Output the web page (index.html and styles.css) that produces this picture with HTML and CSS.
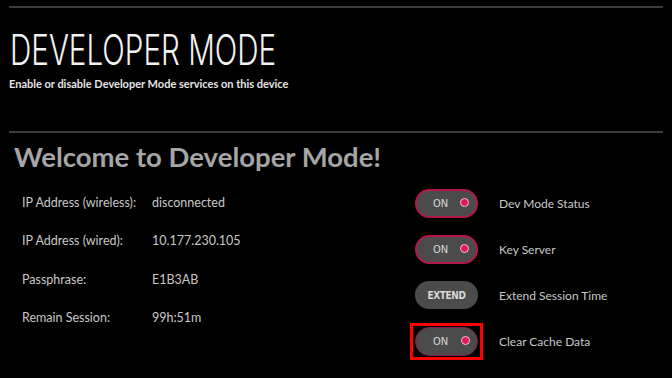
FILE: index.html
```html
<!DOCTYPE html>
<html lang="en">
<head>
  <meta charset="UTF-8">
  <meta name="viewport" content="width=device-width, initial-scale=1.0">
  <title>Developer Mode</title>
  <link rel="stylesheet" href="styles.css">
</head>
<body>
  <div class="page">
    <div class="rule"></div>
    <h1 class="title">DEVELOPER MODE</h1>
    <p class="subtitle">Enable or disable Developer Mode services on this device</p>
    <div class="rule rule-bottom"></div>
    <h2 class="welcome">Welcome to Developer Mode!</h2>
    <div class="content">
      <div class="info">
        <div class="info-row"><span class="info-label">IP Address (wireless):</span><span class="info-value">disconnected</span></div>
        <div class="info-row"><span class="info-label">IP Address (wired):</span><span class="info-value">10.177.230.105</span></div>
        <div class="info-row"><span class="info-label">Passphrase:</span><span class="info-value">E1B3AB</span></div>
        <div class="info-row"><span class="info-label">Remain Session:</span><span class="info-value">99h:51m</span></div>
      </div>
      <div class="controls">
        <div class="control-row">
          <button class="toggle">ON<span class="dot"></span></button>
          <span class="control-label">Dev Mode Status</span>
        </div>
        <div class="control-row">
          <button class="toggle">ON<span class="dot"></span></button>
          <span class="control-label">Key Server</span>
        </div>
        <div class="control-row">
          <button class="extend-btn">EXTEND</button>
          <span class="control-label">Extend Session Time</span>
        </div>
        <div class="control-row">
          <div class="highlight">
            <button class="toggle toggle-focus">ON<span class="dot"></span></button>
          </div>
          <span class="control-label">Clear Cache Data</span>
        </div>
      </div>
    </div>
  </div>
</body>
</html>
```

FILE: styles.css
```css
    body {
      margin: 0;
      background-color: #000;
      color: #fff;
      width: 672px;
      height: 378px;
      overflow: hidden;
      font-family: 'Lato', 'Open Sans', sans-serif;
    }
    .page {
      padding: 6px 9px 0 9px;
      width: 654px;
    }
    .rule {
      height: 2px;
      background-color: #3d3d3d;
    }
    .rule-bottom {
      margin-top: 40px;
    }
    .title {
      margin: 21px 0 0 1px;
      font-family: 'Inter', sans-serif;
      font-weight: 300;
      font-size: 42px;
      line-height: 42px;
      transform: scaleX(0.705);
      transform-origin: left center;
      white-space: nowrap;
      color: #f2f2f2;
    }
    .subtitle {
      margin: 6px 0 0 0;
      font-size: 11px;
      font-weight: 700;
      line-height: 14px;
      color: #e4e4e4;
    }
    .welcome {
      margin: 9px 0 0 5px;
      font-size: 27.5px;
      font-weight: 700;
      line-height: 30px;
      color: #a6a6a6;
    }
    .content {
      display: flex;
      margin-top: 8px;
    }
    .info {
      margin-left: 13px;
      padding-top: 3px;
      width: 393px;
    }
    .info-row {
      display: flex;
      align-items: center;
      height: 38.5px;
      font-size: 12.5px;
      color: #c8c8c8;
    }
    .info-label {
      width: 130px;
    }
    .controls {
      display: flex;
      flex-direction: column;
    }
    .control-row {
      display: flex;
      align-items: center;
      height: 46px;
    }
    .control-label {
      margin-left: 21px;
      font-size: 12px;
      color: #c8c8c8;
    }
    .toggle, .extend-btn {
      position: relative;
      box-sizing: border-box;
      width: 63px;
      height: 29px;
      border-radius: 15px;
      background-color: #4b4b4b;
      border: 2px solid #b3184d;
      color: #d8d8d8;
      font-family: 'DejaVu Sans Condensed', sans-serif;
      font-size: 11px;
      text-align: left;
      padding: 0 0 0 16px;
      cursor: pointer;
    }
    .extend-btn {
      border-color: #4b4b4b;
      text-align: center;
      font-weight: bold;
      padding: 0;
      height: 28px;
      font-size: 10px;
      letter-spacing: -0.4px;
    }
    .dot {
      position: absolute;
      right: 7px;
      top: 50%;
      width: 7px;
      height: 7px;
      margin-top: -5px;
      border-radius: 50%;
      background-color: #e0195c;
      border: 1.5px solid #f0c0d0;
    }
    .toggle-focus {
      border: 1px solid #8c1c46;
      padding-left: 17px;
    }
    .highlight {
      margin: 0 -5px;
      padding: 1px 2px;
      border: 3px solid #ff0000;
      display: flex;
    }
```
